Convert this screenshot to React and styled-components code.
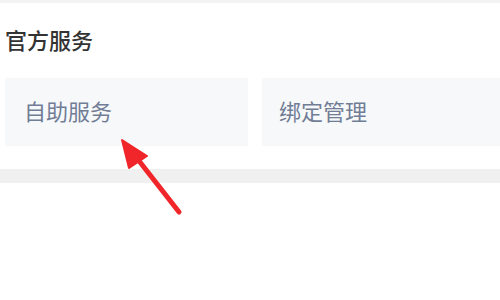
import styled, { createGlobalStyle } from "styled-components";

const GlobalStyle = createGlobalStyle`
  html, body {
    margin: 0;
    padding: 0;
    background: #ffffff;
  }
  body {
    font-family: "Noto Sans CJK SC", "Noto Sans", sans-serif;
  }
`;

const Page = styled.div`
  position: relative;
  width: 500px;
  height: 300px;
  overflow: hidden;
  background: #ffffff;
`;

const TopLine = styled.div`
  height: 3px;
  background: #f3f3f4;
`;

const Section = styled.section`
  padding: 23px 0 23px 5px;
`;

const Title = styled.h2`
  margin: 0;
  font-size: 22px;
  line-height: 26px;
  font-weight: 500;
  color: #333333;
`;

const Grid = styled.div`
  display: grid;
  grid-template-columns: 243px 1fr;
  gap: 14px;
  margin-top: 26px;
  margin-right: -2px;
`;

const Card = styled.div`
  display: flex;
  align-items: center;
  height: 68px;
  box-sizing: border-box;
  padding-left: ${(p) => p.$indent || 19}px;
  padding-bottom: 5px;
  background: #f7f8fa;
  font-size: 22px;
  color: #717d95;
`;

const Band = styled.div`
  height: 14px;
  background: #f0f0f1;
`;

const Arrow = styled.svg`
  position: absolute;
  left: 0;
  top: 0;
  pointer-events: none;
`;

export default function App() {
  return (
    <Page>
      <GlobalStyle />
      <TopLine />
      <Section>
        <Title>官方服务</Title>
        <Grid>
          <Card>自助服务</Card>
          <Card $indent={17}>绑定管理</Card>
        </Grid>
      </Section>
      <Band />
      <Arrow width="500" height="300" viewBox="0 0 500 300">
        <line x1="179" y1="212" x2="136" y2="157" stroke="#f0262b" strokeWidth="5" strokeLinecap="round" />
        <polygon points="122,140 147,156 129,168" fill="#f0262b" stroke="#f0262b" strokeWidth="2" strokeLinejoin="round" />
      </Arrow>
    </Page>
  );
}
